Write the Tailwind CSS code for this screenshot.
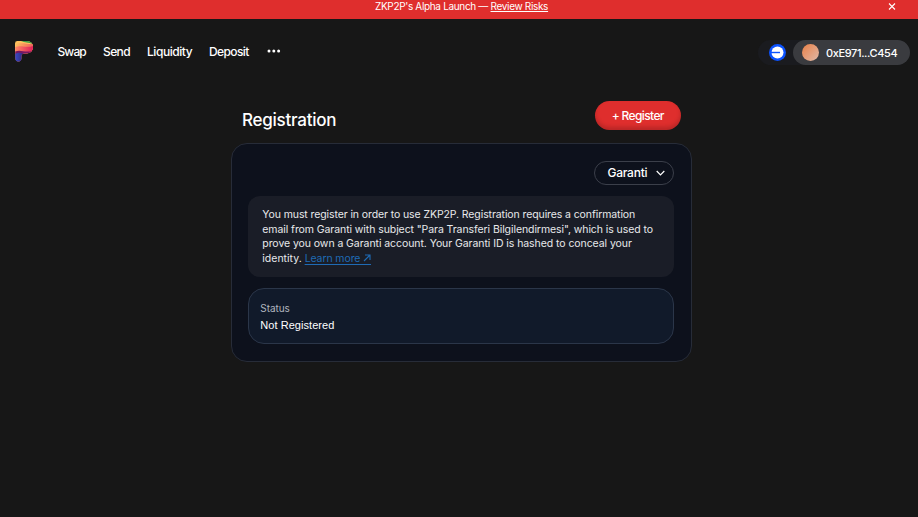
<!DOCTYPE html>
<html lang="en">
<head>
<meta charset="utf-8">
<title>ZKP2P</title>
<script src="https://cdn.jsdelivr.net/npm/@tailwindcss/browser@4"></script>
</head>
<body class="h-[517px] overflow-hidden bg-[#171717] font-['Inter',sans-serif] text-white">
<div class="flex h-[19px] items-start bg-[#df2e2d] pr-[21px] pl-[375px] text-[10px] leading-[13px]">
  <p class="whitespace-nowrap tracking-[-0.33px]">ZKP2P's Alpha Launch — <a class="underline underline-offset-1">Review Risks</a></p>
  <svg class="mt-[2px] ml-auto" width="10" height="9" viewBox="0 0 10 9" fill="none" stroke="#fff" stroke-width="1.1"><path d="M2 1.5l6 6M8 1.5l-6 6"/></svg>
</div>
<header class="flex h-[66px] items-start pt-[21px] pr-2 pl-[15px]">
  <svg class="mt-px" width="18" height="21" viewBox="0 0 18 21">
    <defs>
      <clipPath id="p"><path d="M0 2.4Q0 0 2.5 0H12Q18 .5 18 6T12 12.5H9Q6.4 12.8 6.4 15V17Q6.4 20.5 3.4 20.5T.4 17Z"/></clipPath>
      <linearGradient id="a"><stop stop-color="#ffc15e"/><stop offset="1" stop-color="#f0605a"/></linearGradient>
      <linearGradient id="b"><stop stop-color="#ff8a66"/><stop offset="1" stop-color="#e01e5a"/></linearGradient>
      <linearGradient id="c"><stop stop-color="#374bc8"/><stop offset="1" stop-color="#342374"/></linearGradient>
    </defs>
    <g clip-path="url(#p)">
      <path d="M0 0H18V21H0Z" fill="#ffc15e"/>
      <path d="M6 0H18V3C13 1 10 2 6 0Z" fill="#3d9e48"/>
      <path d="M0 3.5C5 1 11 3 18 3V10H0Z" fill="url(#a)"/>
      <path d="M0 6C6 3.5 10 7.5 18 5V13H0Z" fill="url(#b)"/>
      <path d="M0 10.5C6 8 9 12 18 10V12L9 13V21H0Z" fill="#761763"/>
      <path d="M0 13C4 10.5 7 12 9 13V21H0Z" fill="url(#c)"/>
    </g>
  </svg>
  <nav class="mt-[3px] ml-[24.5px] flex items-center text-[12px] leading-[17px] font-medium whitespace-nowrap">
    <a class="w-[45.5px] tracking-[-0.9px]">Swap</a><a class="w-11 tracking-[-0.6px]">Send</a><a class="w-[62px] tracking-[-0.45px]">Liquidity</a><a class="w-[58px] tracking-[-0.6px]">Deposit</a>
    <svg class="-mt-px" width="14" height="4" viewBox="0 0 14 4" fill="#fff"><circle cx="2" cy="2" r="1.5"/><circle cx="6.8" cy="2" r="1.5"/><circle cx="11.6" cy="2" r="1.5"/></svg>
  </nav>
  <div class="ml-auto flex h-[25px] items-center rounded-full bg-[#1a1b1f] pl-[11px]">
    <svg width="17" height="17" viewBox="0 0 17 17"><circle cx="8.5" cy="8.5" r="8.5" fill="#0b52ff"/><circle cx="8.5" cy="8.5" r="6" fill="#fff"/><path d="M2 7.8H11V9.2H2Z" fill="#0b52ff"/></svg>
    <div class="ml-[7px] flex h-[25px] w-[117px] items-center rounded-full bg-[#3a3b3f] pl-[9px]">
      <span class="size-[17px] rounded-full bg-linear-to-br from-[#e87f43] to-[#deb9a8]"></span>
      <span class="mt-px ml-[7px] text-[11px] font-medium tracking-[-0.38px]">0xE971...C454</span>
    </div>
  </div>
</header>
<main class="ml-[231px] w-[460.5px] pt-4">
  <div class="flex h-[42px] items-start justify-between pr-[11px] pl-[11px]">
    <h1 class="mt-[7px] text-[17px] leading-6 font-medium tracking-[-0.25px]">Registration</h1>
    <button class="h-[29px] w-[85.5px] rounded-full bg-[#df2e2d] text-[12px] font-medium tracking-[-0.62px] shadow-[inset_0_-3px_4px_rgba(0,0,0,0.18)]">+ Register</button>
  </div>
  <section class="h-[218.5px] rounded-2xl border border-[#272c38] bg-[#0d111c] pr-[16.5px] pl-[16.3px] pt-[17px]">
    <button class="ml-auto flex h-6 w-[80.5px] items-center rounded-full border border-[#3b3f4a] pl-[13px] text-[12px] font-medium tracking-[-0.25px]">Garanti
      <svg class="ml-auto mr-[8px]" width="9" height="6" viewBox="0 0 9 6" fill="none" stroke="#fff" stroke-width="1.2"><path d="M.7 1L4.5 4.8 8.3 1"/></svg>
    </button>
    <div class="mt-[11px] h-[81px] rounded-xl bg-[#1a1d27] px-[14px] pt-[12px] text-[10.5px] leading-[14.67px] whitespace-nowrap text-[#e8e9eb]">
      <p class="tracking-[-0.1px]">You must register in order to use ZKP2P. Registration requires a confirmation</p>
      <p class="tracking-[-0.08px]">email from Garanti with subject "Para Transferi Bilgilendirmesi", which is used to</p>
      <p class="tracking-[-0.07px]">prove you own a Garanti account. Your Garanti ID is hashed to conceal your</p>
      <p>identity. <a class="text-[#1f6bb5] underline underline-offset-2 tracking-[-0.1px]">Learn more&nbsp;<span class="inline-block border-b border-[#1f6bb5] pb-[1.5px] leading-none -mb-[2.5px]"><svg width="8" height="8" viewBox="0 0 8 8" fill="none" stroke="#1f6bb5" stroke-width="1.1"><path d="M1 7L7 1M2 1H7V6"/></svg></span></a></p>
    </div>
    <div class="mt-[11px] h-[56px] rounded-2xl border border-[#2b3649] bg-[#111a2a] pt-[11.5px] pl-[11px]">
      <p class="text-[10px] leading-[14px] tracking-[-0.05px] text-[#b0b5be]">Status</p>
      <p class="mt-[3px] font-['Liberation_Sans',Arial,sans-serif] text-[11px] leading-[15px] tracking-[0.05px]">Not Registered</p>
    </div>
  </section>
</main>
</body>
</html>
